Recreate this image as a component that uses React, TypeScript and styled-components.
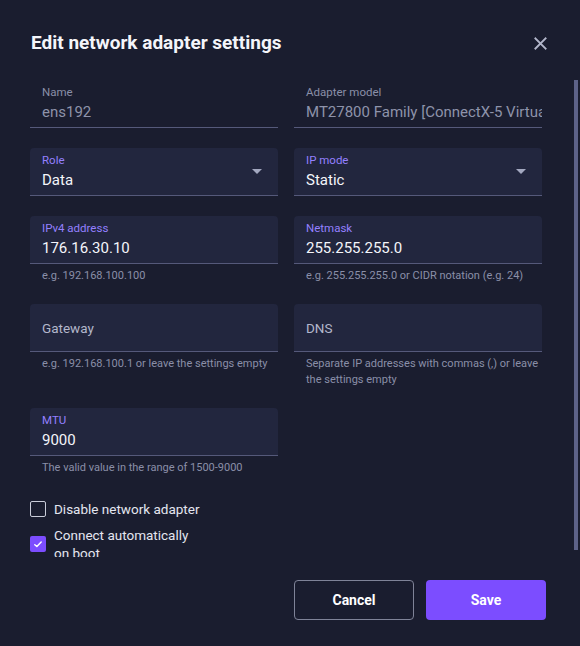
import { createGlobalStyle } from 'styled-components';
import styled from 'styled-components';

const GlobalStyle = createGlobalStyle`
  * { box-sizing: border-box; }
  html, body { margin: 0; padding: 0; height: 100%; }
  body {
    background: #1a1d2f;
    font-family: Roboto, 'Liberation Sans', sans-serif;
    color: #eef0f6;
  }
`;

type FieldProps = {
  label: string;
  value?: string;
  helper?: string;
  readOnly?: boolean;
  select?: boolean;
};

function Field({ label, value, helper, readOnly, select }: FieldProps) {
  const empty = !value;
  return (
    <FieldWrap>
      <FieldBox $filled={!readOnly}>
        <FieldInner $empty={empty}>
          {empty ? (
            <Placeholder>{label}</Placeholder>
          ) : (
            <>
              <Label $readOnly={readOnly}>{label}</Label>
              <Value $readOnly={readOnly}>{value}</Value>
            </>
          )}
        </FieldInner>
        {select && (
          <Arrow viewBox="0 0 10 5" width="10" height="5">
            <path d="M0 0h10L5 5z" fill="#a3a8c0" />
          </Arrow>
        )}
      </FieldBox>
      {helper && <Helper>{helper}</Helper>}
    </FieldWrap>
  );
}

function Checkbox({ checked, label }: { checked?: boolean; label: string }) {
  return (
    <CheckRow>
      <Box $checked={checked}>
        {checked && (
          <svg viewBox="0 0 10 8" width="8" height="7">
            <path
              d="M1 4.2l2.6 2.4L9 1"
              fill="none"
              stroke="#fff"
              strokeWidth="1.8"
              strokeLinecap="round"
              strokeLinejoin="round"
            />
          </svg>
        )}
      </Box>
      <CheckLabel>{label}</CheckLabel>
    </CheckRow>
  );
}

export default function App() {
  return (
    <>
      <GlobalStyle />
      <Dialog>
        <Header>
          <Title>Edit network adapter settings</Title>
          <CloseBtn aria-label="close">
            <svg viewBox="0 0 14 14" width="13" height="13">
              <path
                d="M1.5 1.5l11 11M12.5 1.5l-11 11"
                stroke="#b2b6ca"
                strokeWidth="2"
                strokeLinecap="square"
              />
            </svg>
          </CloseBtn>
        </Header>
        <ScrollArea>
          <Body>
            <Row>
              <Field label="Name" value="ens192" readOnly />
              <Field
                label="Adapter model"
                value="MT27800 Family [ConnectX-5 Virtual Function]"
                readOnly
              />
            </Row>
            <Row>
              <Field label="Role" value="Data" select />
              <Field label="IP mode" value="Static" select />
            </Row>
            <Row>
              <Field
                label="IPv4 address"
                value="176.16.30.10"
                helper="e.g. 192.168.100.100"
              />
              <Field
                label="Netmask"
                value="255.255.255.0"
                helper="e.g. 255.255.255.0 or CIDR notation (e.g. 24)"
              />
            </Row>
            <Row>
              <Field
                label="Gateway"
                helper="e.g. 192.168.100.1 or leave the settings empty"
              />
              <Field
                label="DNS"
                helper="Separate IP addresses with commas (,) or leave the settings empty"
              />
            </Row>
            <Row>
              <Field
                label="MTU"
                value="9000"
                helper="The valid value in the range of 1500-9000"
              />
            </Row>
            <Checks>
              <Checkbox label="Disable network adapter" />
              <Checkbox checked label="Connect automatically on boot" />
            </Checks>
          </Body>
          <ScrollThumb />
        </ScrollArea>
        <Footer>
          <Button>Cancel</Button>
          <Button $primary>Save</Button>
        </Footer>
      </Dialog>
    </>
  );
}

const Dialog = styled.div`
  height: 100vh;
  display: flex;
  flex-direction: column;
  background: #1a1d2f;
`;

const Header = styled.div`
  display: flex;
  align-items: center;
  justify-content: space-between;
  padding: 32px 29px 26px 31px;
`;

const Title = styled.h1`
  margin: 0;
  font-size: 19px;
  line-height: 22px;
  font-weight: 700;
  color: #f4f5fa;
`;

const CloseBtn = styled.button`
  width: 22px;
  height: 22px;
  padding: 0;
  border: none;
  background: transparent;
  display: flex;
  align-items: center;
  justify-content: center;
`;

const ScrollArea = styled.div`
  position: relative;
  flex: 1;
  min-height: 0;
  display: flex;
`;

const Body = styled.div`
  flex: 1;
  overflow-y: auto;
  padding: 0 36px 4px 30px;
  scrollbar-width: none;

  &::-webkit-scrollbar {
    display: none;
  }
`;

const ScrollThumb = styled.div`
  position: absolute;
  top: 0;
  right: 2px;
  width: 4px;
  height: 470px;
  background: #5d6288;
`;

const Row = styled.div`
  display: grid;
  grid-template-columns: 248px 248px;
  column-gap: 16px;
  align-items: start;
  margin-bottom: 20px;
`;

const FieldWrap = styled.div`
  min-width: 0;
`;

const FieldBox = styled.div<{ $filled: boolean }>`
  height: 48px;
  display: flex;
  align-items: stretch;
  padding: ${(p) => (p.$filled ? '0 16px 0 12px' : '0 0 0 12px')};
  background: ${(p) => (p.$filled ? '#22263e' : 'transparent')};
  border-bottom: 1px solid #55597a;
  border-radius: 4px 4px 0 0;
`;

const FieldInner = styled.div<{ $empty: boolean }>`
  flex: 1;
  min-width: 0;
  display: flex;
  flex-direction: column;
  justify-content: ${(p) => (p.$empty ? 'center' : 'flex-start')};
  padding-top: ${(p) => (p.$empty ? '0' : '5px')};
`;

const Label = styled.div<{ $readOnly?: boolean }>`
  font-size: 11.5px;
  line-height: 14px;
  color: ${(p) => (p.$readOnly ? '#8a8fa8' : '#9480ff')};
`;

const Value = styled.div<{ $readOnly?: boolean }>`
  margin-top: 3px;
  font-size: 15px;
  line-height: 20px;
  color: ${(p) => (p.$readOnly ? '#8e93aa' : '#f4f5fa')};
  white-space: nowrap;
  overflow: hidden;
`;

const Placeholder = styled.div`
  font-size: 13.5px;
  line-height: 18px;
  color: #b3b7cb;
`;

const Arrow = styled.svg`
  align-self: center;
  flex-shrink: 0;
`;

const Helper = styled.div`
  padding: 4px 0 0 12px;
  font-size: 11px;
  line-height: 16px;
  color: #8a8fa8;
`;

const Checks = styled.div`
  display: flex;
  flex-direction: column;
  gap: 8px;
  margin-top: 24px;
`;

const CheckRow = styled.label`
  display: flex;
  align-items: center;
  gap: 8px;
`;

const Box = styled.span<{ $checked?: boolean }>`
  width: 16px;
  height: 16px;
  flex-shrink: 0;
  display: flex;
  align-items: center;
  justify-content: center;
  border-radius: 2px;
  border: ${(p) => (p.$checked ? 'none' : '1.5px solid #c9ccd9')};
  background: ${(p) => (p.$checked ? '#7c4dff' : 'transparent')};
`;

const CheckLabel = styled.span`
  max-width: 150px;
  font-size: 13.5px;
  line-height: 18px;
  color: #e4e6ef;
`;

const Footer = styled.div`
  display: flex;
  justify-content: flex-end;
  gap: 12px;
  padding: 23px 34px 26px;
`;

const Button = styled.button<{ $primary?: boolean }>`
  width: 120px;
  height: 40px;
  border-radius: 4px;
  font-family: Roboto, 'Liberation Sans', sans-serif;
  font-size: 14px;
  font-weight: 700;
  color: #ffffff;
  background: ${(p) => (p.$primary ? '#7c4dff' : 'transparent')};
  border: ${(p) => (p.$primary ? 'none' : '1px solid #7f8398')};
`;
